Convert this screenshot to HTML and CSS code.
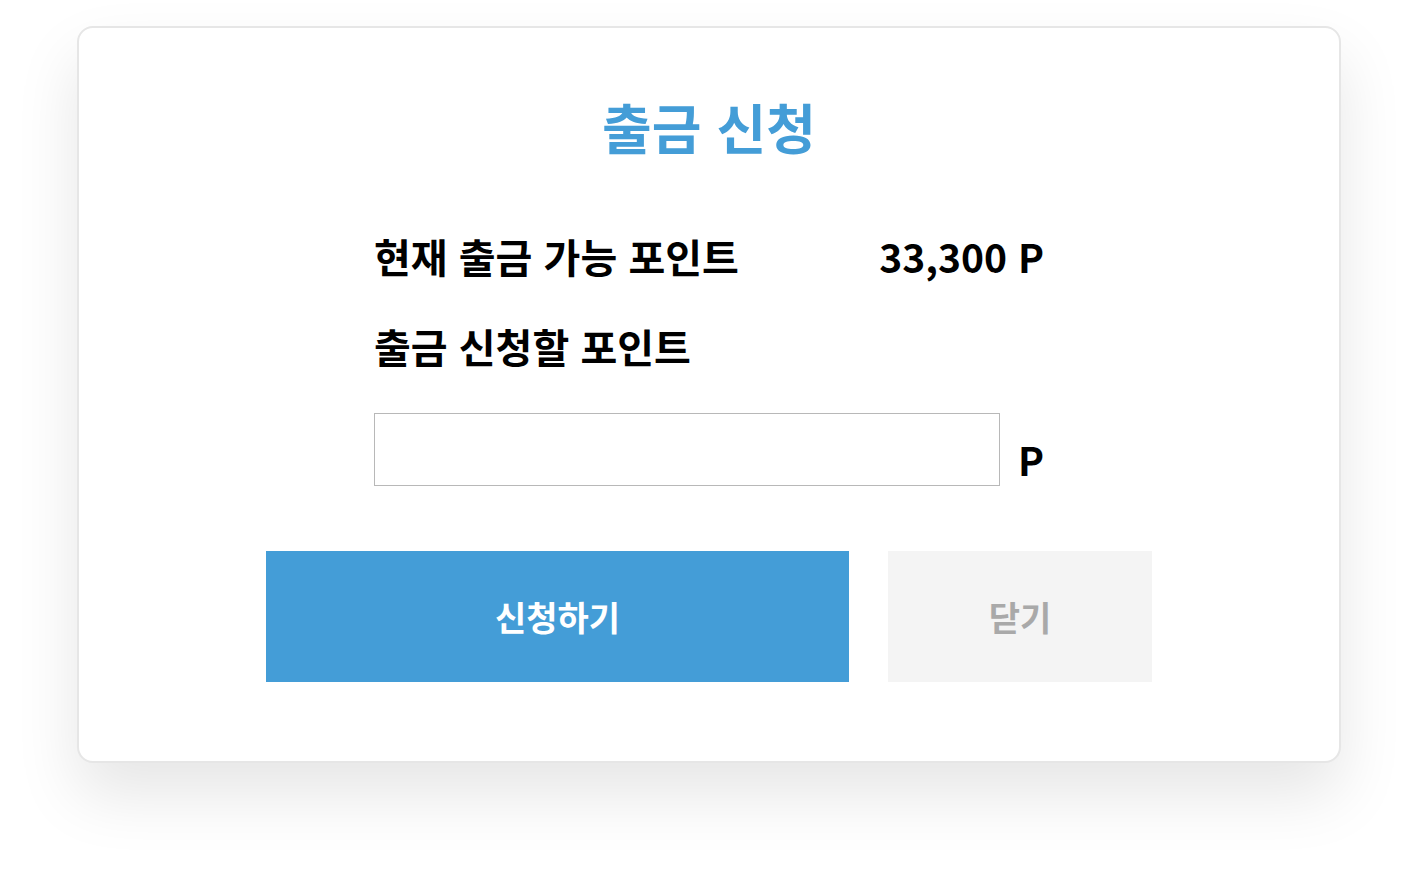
FILE: index.html
```html
<!DOCTYPE html>
<html lang="ko">
<head>
<meta charset="utf-8">
<title>출금 신청</title>
<link rel="stylesheet" href="styles.css">
</head>
<body>
<div class="modal">
  <h1 class="title">출금 신청</h1>
  <div class="form">
    <div class="row">
      <span class="label">현재 출금 가능 포인트</span>
      <span class="value">33,300 P</span>
    </div>
    <div class="row">
      <span class="label">출금 신청할 포인트</span>
    </div>
    <div class="input-row">
      <input class="amount" type="text">
      <span class="unit">P</span>
    </div>
  </div>
  <div class="actions">
    <button class="btn btn-primary">신청하기</button>
    <button class="btn btn-close">닫기</button>
  </div>
</div>
</body>
</html>
```

FILE: styles.css
```css
* { box-sizing: border-box; }
html, body { margin: 0; padding: 0; background: #ffffff; }
body {
  font-family: "Noto Sans CJK KR", "Noto Sans", sans-serif;
  color: #000;
  padding-top: 26px;
  min-height: 891px;
}
.modal {
  width: 1264px;
  height: 737px;
  margin: 0 auto;
  border: 2px solid #e6e6e6;
  border-radius: 16px;
  background: #fff;
  box-shadow: 0 32px 64px rgba(0, 0, 0, 0.1);
  padding-top: 59px;
}
.title {
  margin: 0;
  text-align: center;
  font-size: 54px;
  font-weight: 700;
  line-height: 80px;
  color: #449dd7;
}
.form {
  width: 670px;
  margin: 49px auto 0;
}
.row {
  display: flex;
  justify-content: space-between;
  align-items: center;
  height: 80px;
  margin-bottom: 10px;
}
.label {
  font-size: 40px;
  font-weight: 700;
  line-height: 80px;
}
.value {
  font-size: 39px;
  font-weight: 700;
  line-height: 80px;
}
.input-row {
  display: flex;
  justify-content: space-between;
  align-items: flex-end;
  margin-top: 27px;
}
.amount {
  width: 626px;
  height: 73px;
  border: 1.5px solid #b8b8b8;
  outline: none;
  font-size: 30px;
  padding: 0 16px;
}
.unit {
  font-size: 39px;
  font-weight: 700;
  line-height: 54px;
}
.actions {
  display: flex;
  justify-content: center;
  gap: 39px;
  margin-top: 65px;
}
.btn {
  height: 131px;
  border: none;
  font-family: inherit;
  font-size: 34px;
  font-weight: 700;
  cursor: pointer;
}
.btn-primary {
  width: 583px;
  background: #449dd7;
  color: #fff;
}
.btn-close {
  width: 264px;
  background: #f4f4f4;
  color: #a9a9a9;
}
```
